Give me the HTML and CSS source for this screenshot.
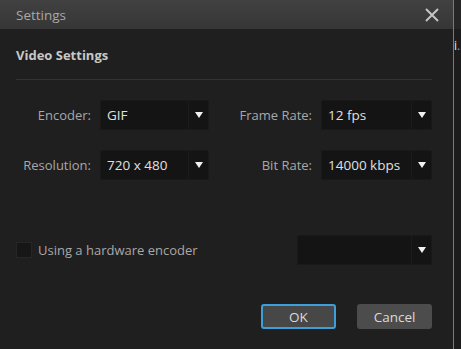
FILE: index.html
```html
<!DOCTYPE html>
<html lang="en">
<head>
    <meta charset="UTF-8">
    <title>Settings</title>
    <link rel="stylesheet" href="styles.css">
</head>
<body>
    <div class="dialog">
        <div class="titlebar">
            <span class="title">Settings</span>
            <svg class="close" width="16" height="16" viewBox="0 0 16 16">
                <path d="M2 2 L14 14 M14 2 L2 14" stroke="#c4c4c4" stroke-width="2" fill="none"/>
            </svg>
        </div>
        <div class="content">
            <h2 class="section">Video Settings</h2>
            <div class="fields">
                <label class="label">Encoder:</label>
                <div class="select"><span>GIF</span><i class="arrow"></i></div>
                <label class="label">Frame Rate:</label>
                <div class="select"><span>12 fps</span><i class="arrow"></i></div>
                <label class="label">Resolution:</label>
                <div class="select"><span>720 x 480</span><i class="arrow"></i></div>
                <label class="label">Bit Rate:</label>
                <div class="select"><span>14000 kbps</span><i class="arrow"></i></div>
            </div>
            <div class="hw-row">
                <label class="check"><span class="box"></span>Using a hardware encoder</label>
                <div class="select wide"><span></span><i class="arrow"></i></div>
            </div>
            <div class="buttons">
                <button class="btn primary">OK</button>
                <button class="btn">Cancel</button>
            </div>
        </div>
    </div>
    <div class="side">
        <div class="side-top"></div>
        <div class="side-text">i<span>..</span></div>
    </div>
</body>
</html>
```

FILE: styles.css
```css
body { margin: 0; height: 349px; display: flex; background-color: #1c1c1c; font-family: 'Open Sans', 'Noto Sans', sans-serif; font-size: 13px; overflow: hidden; }
.dialog { width: 453px; border-right: 1px solid #7a7a7a; background-color: #1f1f1f; display: flex; flex-direction: column; }
.titlebar { height: 29px; display: flex; align-items: center; justify-content: space-between; padding: 0 13px 0 16px; background: linear-gradient(#414141, #363636); }
.title { color: #a8a8a8; font-size: 13.5px; }
.content { padding: 0 21px 0 16px; }
.section { margin: 0; padding: 17px 0 15px; font-size: 13px; font-weight: bold; color: #c8c8c8; border-bottom: 1px solid #343434; }
.fields { display: grid; grid-template-columns: 84px 109px 112px 111px; grid-auto-rows: 30px; row-gap: 20px; margin-top: 20px; }
.label { display: flex; align-items: center; justify-content: flex-end; padding-right: 9px; color: #a8a8a8; }
.select { display: flex; align-items: center; height: 30px; box-sizing: border-box; background-color: #141414; border: 1px solid #191919; border-radius: 2px; color: #e0e0e0; font-size: 13.5px; }
.select span { flex: 1; padding-left: 6px; }
.arrow { width: 19px; height: 28px; border-left: 1px solid #1b1b1b; display: flex; align-items: center; justify-content: center; }
.arrow::after { content: ""; border-left: 4px solid transparent; border-right: 4px solid transparent; border-top: 6px solid #f2f2f2; }
.hw-row { display: flex; align-items: center; justify-content: space-between; margin-top: 55px; }
.check { display: flex; align-items: center; color: #a8a8a8; }
.box { width: 14px; height: 14px; background-color: #161616; border: 1px solid #262626; margin-right: 6px; }
.wide { width: 135px; }
.buttons { display: flex; justify-content: flex-end; gap: 21px; margin-top: 39px; }
.btn { width: 75px; height: 25px; box-sizing: border-box; border: 2px solid #4c4c4c; border-radius: 3px; background-color: #4c4c4c; color: #dadada; font-family: inherit; font-size: 13.5px; padding: 0; }
.btn.primary { background-color: #474747; border-color: #3d9fd9; }
.side { flex: 1; display: flex; flex-direction: column; overflow: hidden; }
.side-top { height: 29px; background-color: #262626; }
.side-text { margin-top: 8px; color: #e6e6e6; font-size: 12px; white-space: nowrap; }
.side-text span { color: #5fb4c8; }
```
